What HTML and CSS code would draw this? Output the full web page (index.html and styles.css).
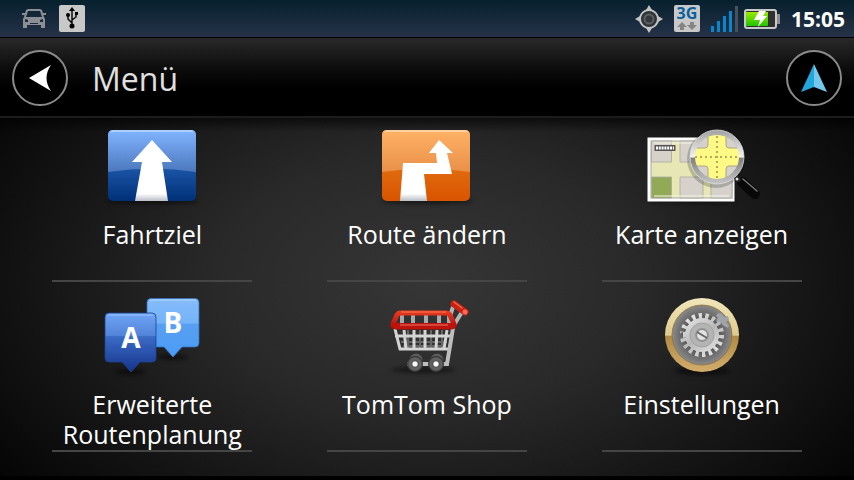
FILE: index.html
```html
<!DOCTYPE html>
<html lang="de">
<head>
  <meta charset="UTF-8" />
  <meta name="viewport" content="width=device-width, initial-scale=1.0" />
  <title>Menü</title>
  <link rel="stylesheet" href="styles.css">
</head>
<body>
  <div class="status-bar">
    <div class="status-group">
      <svg width="24" height="20" viewBox="0 0 24 20" fill="#8b8e92" aria-hidden="true">
        <path fill-rule="evenodd" d="M6 0h12l2 1 2 7 1 2v9h-4v-3H5v3H1v-9l1-2 2-7zM6 2L4 8h16l-2-6zM3 10v3h3v-2zM21 10v3h-3v-2zM8 14v1h8v-1z" />
        <path d="M0 4h3v2H0zM21 4h3v2h-3z" />
      </svg>
      <svg width="26" height="27" viewBox="0 0 26 27" aria-hidden="true">
        <rect width="26" height="27" rx="2" fill="#c8c8c8" />
        <path d="M13 5v16M13 18l-4-4v-4M13 15l4-3V9" fill="none" stroke="#000" stroke-width="1.4" />
        <path d="M13 2l3 4h-6z" />
        <circle cx="13" cy="21" r="2.5" />
        <circle cx="9" cy="10" r="2" />
        <path d="M16 7h3v3h-3z" />
      </svg>
    </div>
    <div class="status-group status-right">
      <svg width="28" height="28" viewBox="0 0 28 28" aria-hidden="true">
        <path d="M14 0l3 5 6 6 5 3-5 3-6 6-3 5-3-5-6-6-5-3 5-3 6-6z" fill="#c4c4c4" />
        <circle cx="14" cy="14" r="10" fill="#c4c4c4" />
        <circle cx="14" cy="14" r="8" fill="#2e3338" />
        <circle cx="14" cy="14" r="4.5" fill="#34383c" stroke="#5b5f62" stroke-width="2" />
      </svg>
      <div class="net">
        <span>3G</span>
        <svg width="20" height="8" viewBox="0 0 20 8" aria-hidden="true">
          <path d="M5 0l5 5H7v3H3V5H0zM15 8l-5-5h3V0h4v3h3z" fill="#858585" />
        </svg>
      </div>
      <svg width="27" height="27" viewBox="0 0 27 27" fill="#0a86cc" aria-hidden="true">
        <path d="M0 21h3v6H0zM6 16h3v11H6zM12 11h3v16h-3zM18 6h3v21h-3z" />
        <path d="M24 1h3v26h-3z" fill="#46535f" />
      </svg>
      <svg class="battery" width="36" height="20" viewBox="0 0 36 20" aria-hidden="true">
        <defs>
          <linearGradient id="charge" x1="0" y1="0" x2="0" y2="1">
            <stop offset="0" stop-color="#9be800" />
            <stop offset="1" stop-color="#1fc400" />
          </linearGradient>
        </defs>
        <rect x="1" y="1" width="31" height="18" rx="2" fill="#303030" stroke="#c8c8c8" stroke-width="2" />
        <rect x="2" y="3" width="22" height="14" fill="url(#charge)" />
        <path d="M33 5h3v10h-3z" fill="#8d8d8d" />
        <path d="M15 2h7l-3 5h4l-9 11 2-7h-6z" fill="#fff" />
      </svg>
      <span class="clock">15:05</span>
    </div>
  </div>

  <header class="header">
    <button class="round-btn" aria-label="Zurück">
      <svg width="52" height="52" viewBox="0 0 52 52" aria-hidden="true">
        <path d="M15 26l22-13c-6 9-6 17 0 26z" fill="#fff" />
      </svg>
    </button>
    <h1>Menü</h1>
    <button class="round-btn" aria-label="Navigation">
      <svg width="52" height="52" viewBox="0 0 52 52" aria-hidden="true">
        <path d="M26 12v23l-13 5z" fill="#23a6dc" />
        <path d="M26 12v23l13 5z" fill="#75c8ec" />
      </svg>
    </button>
  </header>

  <main class="menu">
    <button class="tile">
      <svg class="icon" viewBox="0 0 120 76" aria-hidden="true">
        <defs>
          <linearGradient id="blue-top" x1="0" y1="0" x2="0" y2="1">
            <stop offset="0" stop-color="#82b4ff" />
            <stop offset="1" stop-color="#4b78bd" />
          </linearGradient>
          <linearGradient id="blue-base" x1="0" y1="0" x2="0" y2="1">
            <stop offset="0.5" stop-color="#1d58aa" />
            <stop offset="1" stop-color="#003078" />
          </linearGradient>
          <linearGradient id="white-road" x1="0" y1="0" x2="0" y2="1">
            <stop offset="0.88" stop-color="#fff" />
            <stop offset="1" stop-color="#b9bdc6" />
          </linearGradient>
        </defs>
        <ellipse class="shadow" cx="60" cy="73" rx="46" ry="3" />
        <rect x="16" y="2" width="88" height="71" rx="5" fill="url(#blue-base)" />
        <path d="M16 44V7q0-5 5-5h78q5 0 5 5v37q-44-7-88 0z" fill="url(#blue-top)" />
        <path d="M19 4q1-1 3-1h76q2 0 3 1" fill="none" stroke="#b9d8ff" stroke-width="1.5" />
        <path d="M60 12l20 22H70l6 39H43l7-39H40z" fill="url(#white-road)" />
      </svg>
      <span class="label">Fahrtziel</span>
    </button>

    <button class="tile">
      <svg class="icon" viewBox="0 0 120 76" aria-hidden="true">
        <defs>
          <linearGradient id="orange-top" x1="0" y1="0" x2="0" y2="1">
            <stop offset="0" stop-color="#ffb266" />
            <stop offset="1" stop-color="#ea9048" />
          </linearGradient>
          <linearGradient id="orange-base" x1="0" y1="0" x2="0" y2="1">
            <stop offset="0.5" stop-color="#e26d10" />
            <stop offset="1" stop-color="#d95400" />
          </linearGradient>
        </defs>
        <ellipse class="shadow" cx="60" cy="73" rx="46" ry="3" />
        <rect x="15" y="2" width="88" height="71" rx="5" fill="url(#orange-base)" />
        <path d="M15 44V7q0-5 5-5h78q5 0 5 5v37q-44-7-88 0z" fill="url(#orange-top)" />
        <path d="M18 4q1-1 3-1h76q2 0 3 1" fill="none" stroke="#ffdcb4" stroke-width="1.5" />
        <path d="M72 12l14 13h-6l5 21H57l3 27H33l3-38h34l-1-10h-7z" fill="url(#white-road)" />
      </svg>
      <span class="label">Route ändern</span>
    </button>

    <button class="tile">
      <svg class="icon" viewBox="0 0 120 76" aria-hidden="true">
        <defs>
          <linearGradient id="ring" gradientUnits="userSpaceOnUse" x1="0" y1="2" x2="0" y2="56">
            <stop offset="0" stop-color="#a0a0a0" />
            <stop offset="0.5" stop-color="#f4f4f4" />
            <stop offset="0.52" stop-color="#808080" />
            <stop offset="1" stop-color="#c6c6c6" />
          </linearGradient>
          <clipPath id="lens"><circle cx="75" cy="29" r="22.5" /></clipPath>
        </defs>
        <ellipse class="shadow" cx="50" cy="73" rx="46" ry="2" />
        <rect x="5.5" y="9.5" width="87" height="64" fill="#fff" />
        <rect x="9" y="13" width="81" height="57" fill="#e7e6b5" stroke="#aaa99c" />
        <g fill="#d6d2cb" stroke="#aaa79e" stroke-width="0.8">
          <path d="M9.5 13h20v21h-20zM38 13h23v21H38zM38 49h23v21H38zM69 49h21v21H69z" />
          <path d="M9.5 49h20v21h-20z" fill="#92aa57" />
        </g>
        <path d="M12 15h75M12 68h75" stroke="#f6f5e8" stroke-width="1.2" />
        <rect x="12.5" y="17" width="21" height="6" fill="#555" />
        <path d="M14 20h18" stroke="#fff" stroke-width="3" stroke-dasharray="2 0.8" />
        <circle cx="74" cy="31" r="29" fill="#000" opacity="0.2" />
        <path d="M100 54l13 12" stroke="#080808" stroke-width="10" stroke-linecap="round" />
        <path d="M101 51l14 12" stroke="#777" stroke-width="1.5" stroke-linecap="round" />
        <path d="M93 48l5 5" stroke="#222" stroke-width="5" />
        <circle cx="95" cy="51" r="1.5" fill="#ddd" />
        <g clip-path="url(#lens)">
          <path d="M50 4h52v50H50z" fill="#d6d2cb" />
          <path d="M66 0v17q0 3-3 3H50v18h13q3 0 3 3v17h18V41q0-3 3-3h15V20H87q-3 0-3-3V0z" fill="#fff985" stroke="#aaa780" />
          <path d="M75 8v44M53 29h46" stroke="#b5a85b" stroke-width="2" stroke-dasharray="2 3" />
        </g>
        <circle cx="75" cy="29" r="24.5" fill="none" stroke="url(#ring)" stroke-width="5" />
        <circle cx="75" cy="29" r="27" fill="none" stroke="#ddd" stroke-width="0.8" />
      </svg>
      <span class="label">Karte anzeigen</span>
    </button>

    <button class="tile">
      <svg class="icon" viewBox="0 0 120 76" aria-hidden="true">
        <defs>
          <linearGradient id="pin-a" x1="0" y1="0" x2="0" y2="1">
            <stop offset="0" stop-color="#70a5f5" />
            <stop offset="0.38" stop-color="#5284d9" />
            <stop offset="0.4" stop-color="#3a6bc6" />
            <stop offset="1" stop-color="#15348c" />
          </linearGradient>
          <linearGradient id="pin-b" x1="0" y1="0" x2="0" y2="1">
            <stop offset="0" stop-color="#85bcfb" />
            <stop offset="0.42" stop-color="#74b3f8" />
            <stop offset="0.44" stop-color="#579ff2" />
            <stop offset="1" stop-color="#4b9cf5" />
          </linearGradient>
        </defs>
        <ellipse class="shadow" cx="81" cy="59" rx="15" ry="3" />
        <path d="M59 .5h44q4 0 4 4V45q0 4-4 4H90l-9 10-9-10H59q-4 0-4-4V4.5q0-4 4-4z" fill="url(#pin-b)" stroke="#3270bd" stroke-width="0.8" />
        <path d="M58 2h46" stroke="#b4d8ff" />
        <text class="pin-text" x="81" y="35" text-anchor="middle">B</text>
        <ellipse class="shadow" cx="38" cy="74" rx="15" ry="3" />
        <path d="M17 15h43q4 0 4 4v41q0 4-4 4H48l-9 10-9-10H17q-4 0-4-4V19q0-4 4-4z" fill="url(#pin-a)" stroke="#1c418e" stroke-width="0.8" />
        <path d="M16 17h45" stroke="#9bc4ff" />
        <text class="pin-text" x="39" y="50" text-anchor="middle">A</text>
      </svg>
      <span class="label">Erweiterte Routenplanung</span>
    </button>

    <button class="tile">
      <svg class="icon" viewBox="0 0 120 76" aria-hidden="true">
        <defs>
          <linearGradient id="red" gradientUnits="userSpaceOnUse" x1="0" y1="13" x2="0" y2="31">
            <stop offset="0" stop-color="#ea3c22" />
            <stop offset="1" stop-color="#a80b06" />
          </linearGradient>
          <radialGradient id="wheel">
            <stop offset="0" stop-color="#fff" />
            <stop offset="0.25" stop-color="#fff" />
            <stop offset="0.4" stop-color="#555" />
            <stop offset="0.7" stop-color="#666" />
            <stop offset="1" stop-color="#2c2c2c" />
          </radialGradient>
        </defs>
        <ellipse class="shadow" cx="56" cy="72" rx="32" ry="3" />
        <path d="M86 9l-3 9M95 14l-8 13" stroke="#b5b5b5" stroke-width="4" />
        <path d="M35 17v10M46 17v10M59 17v10M72 17v10M82 17v10" stroke="#a9a9a9" stroke-width="4" />
        <path d="M34 44h46M36 48h42M41 32v19M53 32v19M64 32v19M75 32v19" stroke="#666" stroke-width="2" />
        <path d="M28 31l5 20h48M28 38h57M37 32l2 19M47 32v19M58 32v19M70 32l-1 19M80 32l-3 19" fill="none" stroke="#d4d4d4" stroke-width="3" />
        <path d="M86 30l-6 36H40" fill="none" stroke="#bdbdbd" stroke-width="4" />
        <path d="M34 15h45q3 0 4 2l4 9q1 3-3 3H29q-4 0-3-3l4-9q1-2 4-2z" fill="none" stroke="url(#red)" stroke-width="5" stroke-linejoin="round" />
        <path d="M26 25h62q1 6-4 6H30q-5 0-4-6z" fill="#bd130c" />
        <path d="M34 14h45" stroke="#ff7651" />
        <path d="M33 27h48" stroke="#e8786b" />
        <path d="M87 6l11 8" stroke="#c92213" stroke-width="7" stroke-linecap="round" />
        <path d="M87 4l8 6" stroke="#f06a48" stroke-width="1.5" stroke-linecap="round" />
        <circle cx="98" cy="14" r="2.5" fill="#ff6b58" />
        <circle cx="49" cy="62" r="6.5" fill="#5c5c5c" />
        <circle cx="70" cy="62" r="6.5" fill="#5c5c5c" />
        <circle cx="48" cy="66" r="8" fill="url(#wheel)" />
        <circle cx="69" cy="66" r="8" fill="url(#wheel)" />
      </svg>
      <span class="label">TomTom Shop</span>
    </button>

    <button class="tile">
      <svg class="icon" viewBox="0 0 120 76" aria-hidden="true">
        <defs>
          <linearGradient id="gold" x1="0" y1="0" x2="0" y2="1">
            <stop offset="0" stop-color="#f1e7bb" />
            <stop offset="0.5" stop-color="#dfcb8e" />
            <stop offset="0.52" stop-color="#b18b45" />
            <stop offset="1" stop-color="#d2ad6d" />
          </linearGradient>
          <linearGradient id="steel" gradientUnits="userSpaceOnUse" x1="44" y1="15" x2="76" y2="60">
            <stop offset="0" stop-color="#eee" />
            <stop offset="0.5" stop-color="#b8b8b8" />
            <stop offset="1" stop-color="#efefef" />
          </linearGradient>
          <radialGradient id="dial">
            <stop offset="0.6" stop-color="#5c5c5c" />
            <stop offset="1" stop-color="#8a8a8a" />
          </radialGradient>
        </defs>
        <ellipse class="shadow" cx="60" cy="73" rx="28" ry="4" />
        <circle cx="60" cy="37" r="37" fill="url(#gold)" />
        <circle cx="60" cy="37" r="30" fill="url(#dial)" stroke="#8d713d" stroke-width="0.8" />
        <path d="M76 15l4 1 2 3 4-1 1 4-3 2 3 3-1 3-4-2-3-3-3 1-2-4 2-2-2-2z" fill="#a0a3a7" />
        <circle cx="60" cy="37" r="19" fill="none" stroke="url(#steel)" stroke-width="6" pathLength="36" stroke-dasharray="1 1" />
        <circle cx="60" cy="37" r="17" fill="url(#steel)" />
        <circle cx="60" cy="37" r="12" fill="#b4b4b4" stroke="#9c9c9c" stroke-width="0.8" />
        <circle cx="60" cy="37" r="7" fill="#989898" />
        <circle cx="60" cy="37" r="5.5" fill="#e2e2e2" stroke="#888" />
        <path d="M55 34l10 6" stroke="#666" stroke-width="2" />
      </svg>
      <span class="label">Einstellungen</span>
    </button>
  </main>
</body>
</html>
```
FILE: styles.css
```css
* {
  box-sizing: border-box;
}

body {
  margin: 0;
  min-height: 100vh;
  display: flex;
  flex-direction: column;
  background: #000;
  color: #fff;
  font-family: "Open Sans", "Noto Sans", sans-serif;
}

button {
  margin: 0;
  padding: 0;
  border: none;
  background: none;
  color: inherit;
  font-family: inherit;
  cursor: pointer;
}

svg {
  display: block;
}

.status-bar {
  display: flex;
  justify-content: space-between;
  height: 38px;
  padding: 0 9px 0 22px;
  background: linear-gradient(#06202e, #263248);
  border-bottom: 1px solid #000;
}

.status-group {
  display: flex;
  align-items: center;
  gap: 13px;
}

.status-right {
  gap: 11px;
}

.net {
  display: flex;
  flex-direction: column;
  align-items: center;
  width: 26px;
  height: 27px;
  border-radius: 2px;
  background: #c8c8c8;
  color: #08609c;
  font-size: 16px;
  font-weight: bold;
  line-height: 17px;
}

.battery {
  margin-left: -5px;
}

.clock {
  font-size: 21px;
  font-weight: bold;
}

.header {
  display: flex;
  align-items: center;
  gap: 24px;
  height: 80px;
  padding: 2px 12px 0;
  background: linear-gradient(#292929, #0c0c0c 40%, #000 65%);
  border-bottom: 2px solid #1c1c1c;
}

.header h1 {
  flex: 1;
  margin: 0;
  color: #e0e0e0;
  font-size: 32px;
  font-weight: normal;
}

.round-btn {
  width: 56px;
  height: 56px;
  border: 2px solid #8a8a8a;
  border-radius: 50%;
  background: #000;
}

.menu {
  flex: 1;
  display: grid;
  grid-template-columns: repeat(3, 1fr);
  align-content: start;
  justify-items: center;
  gap: 16px 0;
  padding: 10px 15px 24px;
  background:
    linear-gradient(rgba(0, 0, 0, 0.6), transparent 14px),
    radial-gradient(ellipse 62% 90% at 50% 46%, #363636, #292929 40%, #050505);
  border-bottom: 4px solid #000;
}

.tile {
  display: flex;
  flex-direction: column;
  align-items: center;
  gap: 15px;
  width: 200px;
  padding-bottom: 1px;
  border-bottom: 2px solid #454545;
}

.icon {
  width: 120px;
  height: 76px;
  overflow: visible;
}

.label {
  min-height: 60px;
  font-size: 25px;
  line-height: 30px;
}

.shadow {
  fill: #000;
  opacity: 0.5;
  filter: blur(2px);
}

.pin-text {
  fill: #fff;
  font-size: 28px;
  font-weight: bold;
}
```
